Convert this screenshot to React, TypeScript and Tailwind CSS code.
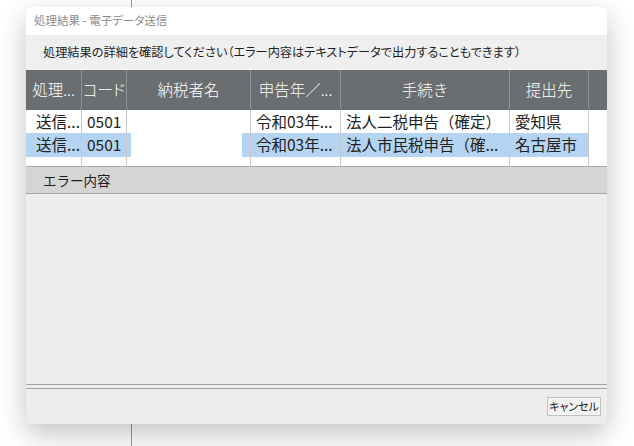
const jp = "font-['Noto_Sans_CJK_JP','Noto_Sans',sans-serif]"
const palt = "[font-feature-settings:'palt']"

const cols = ["w-[56px]", "w-[45px]", "w-[124px]", "w-[90px]", "w-[169px]", "w-[79px]", "w-[18px]"]

const headers = ["処理...", "コード", "納税者名", "申告年／...", "手続き", "提出先", ""]

const rows = [
  { cells: ["送信...", "0501", "", "令和03年...", "法人二税申告（確定）", "愛知県", ""], selected: false },
  { cells: ["送信...", "0501", "", "令和03年...", "法人市民税申告（確...", "名古屋市", ""], selected: true },
]

export default function App() {
  return (
    <div className={`relative w-[634px] h-[446px] overflow-hidden bg-white ${jp}`}>
      {/* page behind the dialog */}
      <div className="absolute top-0 bottom-0 left-[131px] w-px bg-[#9a9a9a]" />

      {/* Dialog */}
      <div className="relative ml-[26px] mt-[7px] w-[581px] h-[417px] flex flex-col rounded-[6px] overflow-hidden bg-[#ededed] shadow-[0_10px_28px_rgba(0,0,0,0.24)]">
        <div className={`h-[28px] shrink-0 bg-white px-[8px] flex items-center text-[11.5px] text-[#8c8c8c] ${palt}`}>
          処理結果 - 電子データ送信
        </div>
        <div className={`h-[35px] shrink-0 bg-[#efefef] pl-[17px] flex items-center text-[12.2px] text-[#1e1e1e] ${palt}`}>
          処理結果の詳細を確認してください（エラー内容はテキストデータで出力することもできます）
        </div>

        {/* table header */}
        <div className="h-[40px] shrink-0 flex bg-[#6b6e71] text-[15.5px] font-light text-white">
          {headers.map((h, i) => (
            <div
              key={i}
              className={`${cols[i]} h-full flex items-center justify-center whitespace-nowrap overflow-hidden ${i === 1 ? palt : ""} ${i < 6 ? "border-r border-[#8f9295]" : ""}`}
            >
              {h}
            </div>
          ))}
        </div>

        {/* table body */}
        <div className="h-[56px] shrink-0 flex flex-col bg-white text-[15.5px] text-[#222]">
          {rows.map((r, ri) => (
            <div key={ri} className={`flex ${ri === 0 ? "h-[23px]" : "h-[24px]"}`}>
              {r.cells.map((c, i) => {
                let bg = ""
                if (r.selected) {
                  if (i === 2) bg = "bg-[linear-gradient(to_right,#b5d4f1_4px,transparent_4px,transparent_115px,#b5d4f1_115px)]"
                  else if (i < 6) bg = "bg-[#b5d4f1]"
                }
                return (
                  <div
                    key={i}
                    className={`${cols[i]} h-full flex items-center whitespace-nowrap overflow-hidden ${i === 0 ? "justify-end pr-[1px]" : "pl-[5px]"} ${i < 6 ? "border-r border-[#c9c9c9]" : ""} ${bg}`}
                  >
                    {c}
                  </div>
                )
              })}
            </div>
          ))}
          <div className="flex-1 flex">
            {cols.map((w, i) => (
              <div key={i} className={`${w} h-full ${i < 6 ? "border-r border-[#c9c9c9]" : ""}`} />
            ))}
          </div>
        </div>

        {/* error section */}
        <div className="h-[28px] shrink-0 bg-[#d5d5d5] border-t border-b border-[#a9a9a9] pl-[17px] flex items-center text-[13.5px] text-[#1e1e1e]">
          エラー内容
        </div>
        <div className="flex-1 bg-[#ededed]" />
        <div className="h-[5px] shrink-0 border-t border-b border-[#a3a3a3] bg-[#ededed]" />

        {/* footer */}
        <div className="h-[35px] shrink-0 flex items-center justify-end pr-[6px] bg-[#ededed]">
          <button className={`w-[54px] h-[19px] border border-[#c2c2c2] bg-[#f3f3f3] text-[11px] text-[#1a1a1a] leading-none flex items-center justify-center ${palt}`}>
            キャンセル
          </button>
        </div>
      </div>
    </div>
  )
}
